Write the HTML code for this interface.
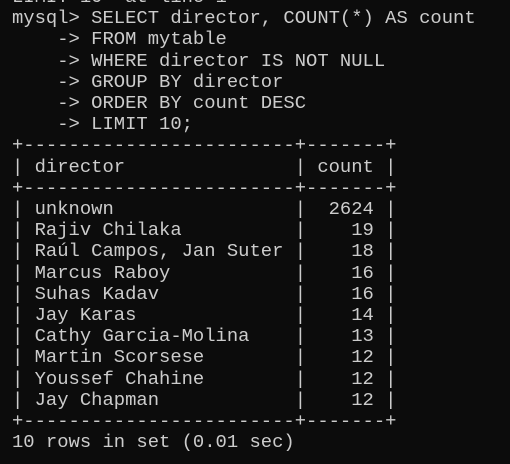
<!DOCTYPE html>
<html><head><meta charset="utf-8"><style>
html,body{margin:0;padding:0;background:#0c0c0c;width:510px;height:464px;overflow:hidden}
pre{position:absolute;left:12px;top:-13px;margin:0;font-family:"Liberation Mono","DejaVu Sans Mono",monospace;font-size:18.85px;line-height:21.2px;color:#cccccc;white-space:pre}
</style></head><body>
<pre>LIMIT 10' at line 1
mysql&gt; SELECT director, COUNT(*) AS count
    -&gt; FROM mytable
    -&gt; WHERE director IS NOT NULL
    -&gt; GROUP BY director
    -&gt; ORDER BY count DESC
    -&gt; LIMIT 10;
+------------------------+-------+
| director               | count |
+------------------------+-------+
| unknown                |  2624 |
| Rajiv Chilaka          |    19 |
| Raúl Campos, Jan Suter |    18 |
| Marcus Raboy           |    16 |
| Suhas Kadav            |    16 |
| Jay Karas              |    14 |
| Cathy Garcia-Molina    |    13 |
| Martin Scorsese        |    12 |
| Youssef Chahine        |    12 |
| Jay Chapman            |    12 |
+------------------------+-------+
10 rows in set (0.01 sec)
</pre>
</body></html>
